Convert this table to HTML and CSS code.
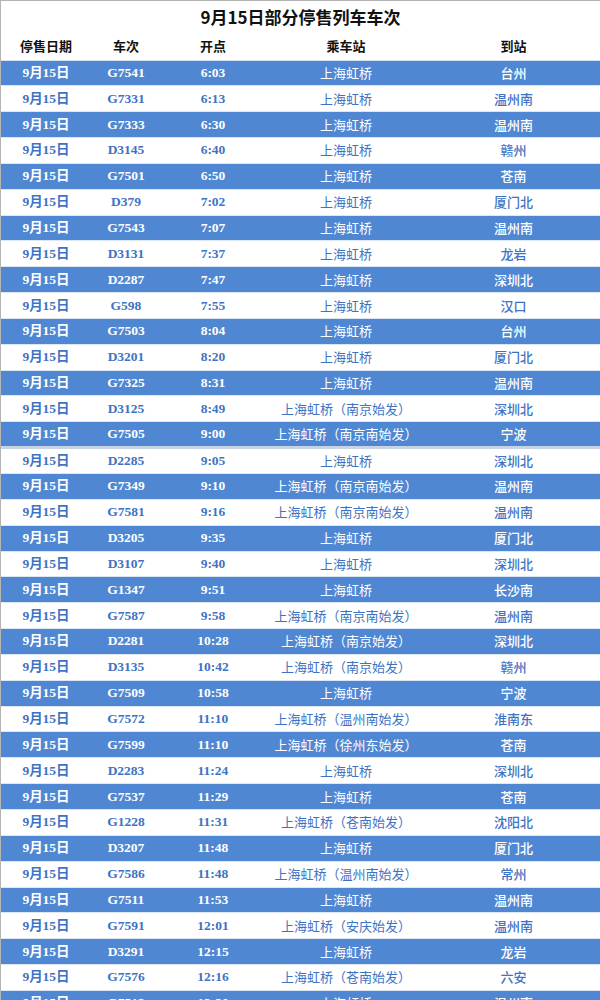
FILE: index.html
```html
<!DOCTYPE html>
<html lang="zh-CN">
<head>
<meta charset="utf-8">
<title>9月15日部分停售列车车次</title>
<link rel="stylesheet" href="styles.css">
</head>
<body>
<div class="page">
  <h1 class="title">9月15日部分停售列车车次</h1>
  <table class="trains">
    <colgroup>
      <col class="c-date"><col class="c-no"><col class="c-time"><col class="c-from"><col class="c-to">
    </colgroup>
    <thead>
      <tr class="head"><th>停售日期</th><th>车次</th><th>开点</th><th>乘车站</th><th>到站</th></tr>
    </thead>
    <tbody>
      <tr class="blue"><td class="d">9月15日</td><td class="n">G7541</td><td class="n">6:03</td><td class="s">上海虹桥</td><td class="t">台州</td></tr>
      <tr class="white"><td class="d">9月15日</td><td class="n">G7331</td><td class="n">6:13</td><td class="s">上海虹桥</td><td class="t">温州南</td></tr>
      <tr class="blue"><td class="d">9月15日</td><td class="n">G7333</td><td class="n">6:30</td><td class="s">上海虹桥</td><td class="t">温州南</td></tr>
      <tr class="white"><td class="d">9月15日</td><td class="n">D3145</td><td class="n">6:40</td><td class="s">上海虹桥</td><td class="t">赣州</td></tr>
      <tr class="blue"><td class="d">9月15日</td><td class="n">G7501</td><td class="n">6:50</td><td class="s">上海虹桥</td><td class="t">苍南</td></tr>
      <tr class="white"><td class="d">9月15日</td><td class="n">D379</td><td class="n">7:02</td><td class="s">上海虹桥</td><td class="t">厦门北</td></tr>
      <tr class="blue"><td class="d">9月15日</td><td class="n">G7543</td><td class="n">7:07</td><td class="s">上海虹桥</td><td class="t">温州南</td></tr>
      <tr class="white"><td class="d">9月15日</td><td class="n">D3131</td><td class="n">7:37</td><td class="s">上海虹桥</td><td class="t">龙岩</td></tr>
      <tr class="blue"><td class="d">9月15日</td><td class="n">D2287</td><td class="n">7:47</td><td class="s">上海虹桥</td><td class="t">深圳北</td></tr>
      <tr class="white"><td class="d">9月15日</td><td class="n">G598</td><td class="n">7:55</td><td class="s">上海虹桥</td><td class="t">汉口</td></tr>
      <tr class="blue"><td class="d">9月15日</td><td class="n">G7503</td><td class="n">8:04</td><td class="s">上海虹桥</td><td class="t">台州</td></tr>
      <tr class="white"><td class="d">9月15日</td><td class="n">D3201</td><td class="n">8:20</td><td class="s">上海虹桥</td><td class="t">厦门北</td></tr>
      <tr class="blue"><td class="d">9月15日</td><td class="n">G7325</td><td class="n">8:31</td><td class="s">上海虹桥</td><td class="t">温州南</td></tr>
      <tr class="white"><td class="d">9月15日</td><td class="n">D3125</td><td class="n">8:49</td><td class="s">上海虹桥（南京始发）</td><td class="t">深圳北</td></tr>
      <tr class="blue split"><td class="d">9月15日</td><td class="n">G7505</td><td class="n">9:00</td><td class="s">上海虹桥（南京南始发）</td><td class="t">宁波</td></tr>
      <tr class="white"><td class="d">9月15日</td><td class="n">D2285</td><td class="n">9:05</td><td class="s">上海虹桥</td><td class="t">深圳北</td></tr>
      <tr class="blue"><td class="d">9月15日</td><td class="n">G7349</td><td class="n">9:10</td><td class="s">上海虹桥（南京南始发）</td><td class="t">温州南</td></tr>
      <tr class="white"><td class="d">9月15日</td><td class="n">G7581</td><td class="n">9:16</td><td class="s">上海虹桥（南京南始发）</td><td class="t">温州南</td></tr>
      <tr class="blue"><td class="d">9月15日</td><td class="n">D3205</td><td class="n">9:35</td><td class="s">上海虹桥</td><td class="t">厦门北</td></tr>
      <tr class="white"><td class="d">9月15日</td><td class="n">D3107</td><td class="n">9:40</td><td class="s">上海虹桥</td><td class="t">深圳北</td></tr>
      <tr class="blue"><td class="d">9月15日</td><td class="n">G1347</td><td class="n">9:51</td><td class="s">上海虹桥</td><td class="t">长沙南</td></tr>
      <tr class="white"><td class="d">9月15日</td><td class="n">G7587</td><td class="n">9:58</td><td class="s">上海虹桥（南京南始发）</td><td class="t">温州南</td></tr>
      <tr class="blue"><td class="d">9月15日</td><td class="n">D2281</td><td class="n">10:28</td><td class="s">上海虹桥（南京始发）</td><td class="t">深圳北</td></tr>
      <tr class="white"><td class="d">9月15日</td><td class="n">D3135</td><td class="n">10:42</td><td class="s">上海虹桥（南京始发）</td><td class="t">赣州</td></tr>
      <tr class="blue"><td class="d">9月15日</td><td class="n">G7509</td><td class="n">10:58</td><td class="s">上海虹桥</td><td class="t">宁波</td></tr>
      <tr class="white"><td class="d">9月15日</td><td class="n">G7572</td><td class="n">11:10</td><td class="s">上海虹桥（温州南始发）</td><td class="t">淮南东</td></tr>
      <tr class="blue"><td class="d">9月15日</td><td class="n">G7599</td><td class="n">11:10</td><td class="s">上海虹桥（徐州东始发）</td><td class="t">苍南</td></tr>
      <tr class="white"><td class="d">9月15日</td><td class="n">D2283</td><td class="n">11:24</td><td class="s">上海虹桥</td><td class="t">深圳北</td></tr>
      <tr class="blue"><td class="d">9月15日</td><td class="n">G7537</td><td class="n">11:29</td><td class="s">上海虹桥</td><td class="t">苍南</td></tr>
      <tr class="white"><td class="d">9月15日</td><td class="n">G1228</td><td class="n">11:31</td><td class="s">上海虹桥（苍南始发）</td><td class="t">沈阳北</td></tr>
      <tr class="blue"><td class="d">9月15日</td><td class="n">D3207</td><td class="n">11:48</td><td class="s">上海虹桥</td><td class="t">厦门北</td></tr>
      <tr class="white"><td class="d">9月15日</td><td class="n">G7586</td><td class="n">11:48</td><td class="s">上海虹桥（温州南始发）</td><td class="t">常州</td></tr>
      <tr class="blue"><td class="d">9月15日</td><td class="n">G7511</td><td class="n">11:53</td><td class="s">上海虹桥</td><td class="t">温州南</td></tr>
      <tr class="white"><td class="d">9月15日</td><td class="n">G7591</td><td class="n">12:01</td><td class="s">上海虹桥（安庆始发）</td><td class="t">温州南</td></tr>
      <tr class="blue"><td class="d">9月15日</td><td class="n">D3291</td><td class="n">12:15</td><td class="s">上海虹桥</td><td class="t">龙岩</td></tr>
      <tr class="white"><td class="d">9月15日</td><td class="n">G7576</td><td class="n">12:16</td><td class="s">上海虹桥（苍南始发）</td><td class="t">六安</td></tr>
      <tr class="blue"><td class="d">9月15日</td><td class="n">G7513</td><td class="n">12:20</td><td class="s">上海虹桥</td><td class="t">温州南</td></tr>
    </tbody>
  </table>
</div>
</body>
</html>
```

FILE: styles.css
```css
html, body {
  margin: 0;
  padding: 0;
  background: #ffffff;
}

body {
  font-family: "Noto Sans CJK SC", "Noto Sans", sans-serif;
  color: #111111;
}

.page {
  width: 599px;
  border-top: 1px solid #b4b4b4;
  border-left: 1px solid #b4b4b4;
}

.title {
  margin: 0;
  padding-top: 3px;
  height: 27px;
  line-height: 26px;
  font-size: 17px;
  font-weight: 700;
  text-align: center;
  color: #111111;
}

.trains {
  width: 599px;
  border-collapse: collapse;
  table-layout: fixed;
}

.c-date { width: 90px; }
.c-no { width: 70px; }
.c-time { width: 104px; }
.c-from { width: 162px; }
.c-to { width: 173px; }

.head th {
  height: 29px;
  padding: 0;
  font-size: 13px;
  font-weight: 700;
  text-align: center;
  vertical-align: middle;
  color: #111111;
  border-bottom: 1px solid #d7e3f4;
  box-sizing: border-box;
}

.trains td {
  height: 25.85px;
  padding: 0;
  font-size: 13px;
  line-height: 16px;
  text-align: center;
  vertical-align: middle;
  white-space: nowrap;
  box-sizing: border-box;
  border-bottom: 1px solid #dce7f6;
}

.trains td.d,
.trains td.n {
  font-family: "Liberation Serif", "Noto Sans CJK SC", serif;
  font-weight: 700;
  font-size: 13.5px;
}

.trains td.s {
  font-weight: 400;
}

.trains td.t {
  font-weight: 500;
}

.blue td {
  background: #4f87d3;
  color: #ffffff;
}

.white td {
  background: #ffffff;
  color: #3e73c3;
}

.split td {
  border-bottom: 3px solid #c8d4e6;
}
```
